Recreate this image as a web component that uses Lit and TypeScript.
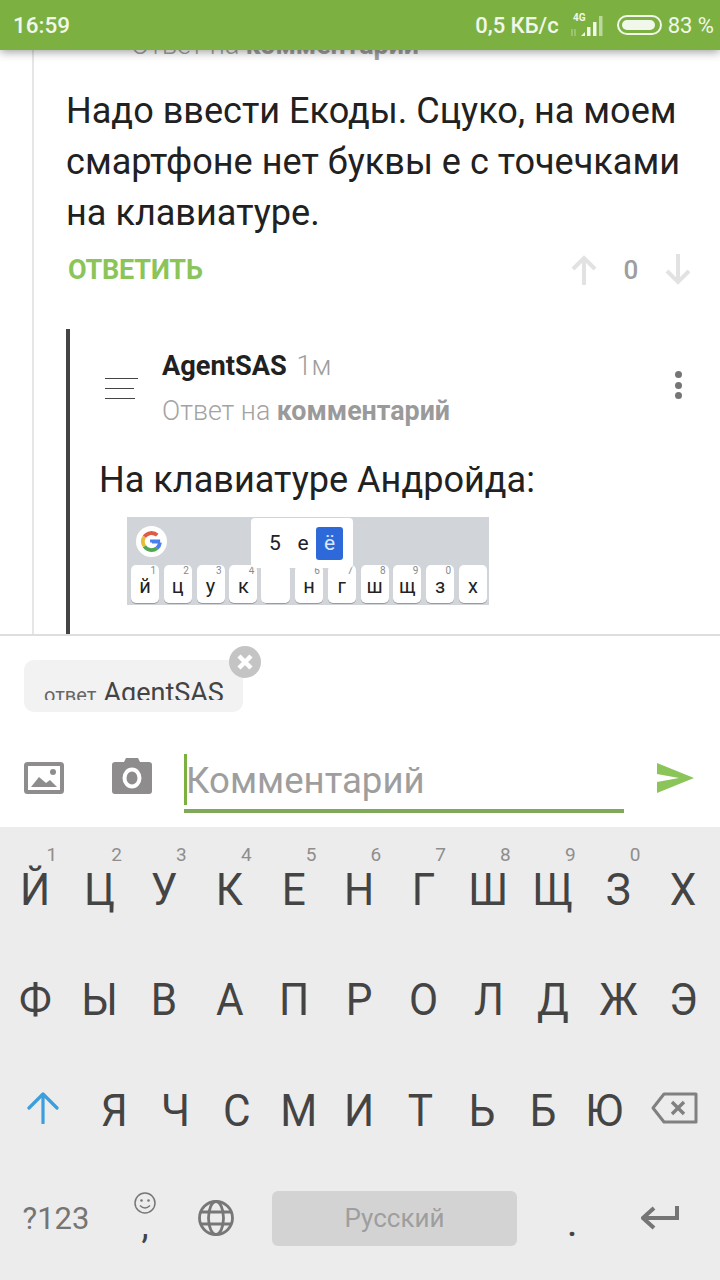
import { LitElement, html, css } from "lit";
import { customElement } from "lit/decorators.js";

const row1 = [["Й","1"],["Ц","2"],["У","3"],["К","4"],["Е","5"],["Н","6"],["Г","7"],["Ш","8"],["Щ","9"],["З","0"],["Х",""]];
const row2 = ["Ф","Ы","В","А","П","Р","О","Л","Д","Ж","Э"];
const row3 = ["Я","Ч","С","М","И","Т","Ь","Б","Ю"];
const mini = [["й","1"],["ц","2"],["у","3"],["к","4"],["",""],["н","6"],["г","7"],["ш","8"],["щ","9"],["з","0"],["х",""]];

@customElement("app-root")
export class AppRoot extends LitElement {
  static styles = css`
    :host { display: block; width: 720px; height: 1280px; overflow: hidden; font-family: Roboto, "Noto Sans", sans-serif; background: #fff; }
    .screen { display: flex; flex-direction: column; height: 1280px; }
    .status { position: relative; z-index: 2; flex: 0 0 50px; height: 50px; background: #7cb142; color: #f1f7ea; display: flex; align-items: center; padding: 0 6px 0 13px; box-sizing: border-box; box-shadow: 0 2px 9px rgba(0,0,0,.38); }
    .time { font-size: 22.5px; font-weight: 500; flex: 1; }
    .speed { font-size: 22px; font-weight: 500; }
    .net { margin: 0 12px 0 11px; display: block; }
    .batt { display: block; margin-right: 6px; }
    .pct { font-size: 22px; }
    .content { flex: 0 0 584px; height: 584px; overflow: hidden; box-sizing: border-box; }
    .thread { margin-left: 32px; border-left: 2px solid #e6e6e6; padding-left: 32px; height: 604px; box-sizing: border-box; }
    .clipped { margin: -20px 0 0 65px; font-size: 26.8px; line-height: 30px; color: #9e9e9e; font-weight: 300; white-space: nowrap; }
    .clipped b, .sub b { font-weight: 700; }
    .msg { margin: 26px 0 0; font-size: 36.1px; line-height: 51px; color: #212121; white-space: nowrap; }
    .actions { display: flex; align-items: center; height: 40px; margin-top: 11px; }
    .reply { flex: 1; font-size: 27px; font-weight: 700; letter-spacing: -.2px; color: #8bc55a; padding-left: 2px; }
    .votes { display: flex; align-items: center; margin-right: 26px; }
    .votes svg { display: block; }
    .zero { width: 62px; text-align: center; font-size: 26px; font-weight: 500; color: #9e9e9e; }
    .nested { margin-top: 39px; height: 320px; border-left: 4px solid #444; box-sizing: border-box; }
    .head { display: flex; padding-top: 20px; height: 125px; box-sizing: border-box; }
    .burger { width: 33px; margin: 29px 24px 0 35px; display: flex; flex-direction: column; gap: 9px; }
    .burger i { display: block; height: 1px; background: #444; }
    .burger i:nth-child(2) { width: 29px; }
    .burger i:nth-child(3) { width: 30px; }
    .who { flex: 1; }
    .name { font-size: 27.2px; line-height: 34px; font-weight: 700; color: #212121; white-space: nowrap; }
    .ago { font-weight: 300; color: #9e9e9e; margin-left: 3px; }
    .sub { font-size: 26.8px; line-height: 30px; margin-top: 13px; color: #a3a3a3; font-weight: 300; white-space: nowrap; }
    .sub b { color: #9a9a9a; }
    .dots { display: flex; flex-direction: column; gap: 3.5px; margin: 22px 38px 0 0; }
    .dots i { display: block; width: 7px; height: 7px; border-radius: 50%; background: #757575; }
    .body { margin: 0 0 0 29px; font-size: 36.1px; line-height: 44px; color: #212121; white-space: nowrap; padding-top: 4px; }
    .shot { position: relative; margin: 15px 0 0 57px; width: 362px; height: 88px; background: #d1d4d9; }
    .g { position: absolute; left: 9px; top: 9px; width: 31px; height: 31px; border-radius: 50%; background: #fff; display: flex; align-items: center; justify-content: center; }
    .g svg { display: block; }
    .minikeys { position: absolute; left: 4px; top: 48px; display: flex; }
    .mk { position: relative; width: 28px; height: 38px; margin-right: 4.8px; border-radius: 5px; background: #fff; box-shadow: 0 1px 0 #9a9ca0; display: flex; align-items: center; justify-content: center; font-size: 20px; color: #222; padding-top: 4px; box-sizing: border-box; }
    .mk sup { position: absolute; right: 3px; top: 1px; font-size: 10px; line-height: 10px; color: #8a8a8a; }
    .pop { position: absolute; left: 124px; top: 1px; width: 102px; height: 50px; background: #fff; border-radius: 4px; display: flex; align-items: center; font-size: 21px; color: #222; }
    .pop span { width: 24px; text-align: center; }
    .pop .a { margin-left: 12px; }
    .pop .b { margin-left: 4px; }
    .pop .c { margin-left: 1px; width: 27px; height: 33px; border-radius: 3px; background: #2e69da; color: #dbe6fa; line-height: 33px; }
    .stem { position: absolute; left: 134px; top: 48px; width: 28px; height: 38px; background: #fff; border-radius: 0 0 5px 5px; }
    .composer { flex: 0 0 193px; height: 193px; box-sizing: border-box; border-top: 2px solid #dedede; position: relative; background: #fff; padding: 24px 0 0 24px; }
    .chip { position: relative; width: 219px; height: 52px; background: #f2f2f2; border-radius: 10px; }
    .chiptext { height: 40px; overflow: hidden; padding: 0 0 0 20px; display: flex; align-items: baseline; gap: 7px; white-space: nowrap; line-height: 67px; color: #444; font-size: 27px; }
    .chiptext small { font-size: 20px; color: #666; }
    .x { position: absolute; right: -18px; top: -14px; width: 32px; height: 32px; display: block; }
    .inputrow { display: flex; align-items: flex-start; margin-top: 42px; }
    .inputrow svg { display: block; flex: none; }
    .ic1 { margin: 8px 48px 0 0; }
    .ic2 { margin: 4px 32px 0 0; }
    .field { width: 440px; height: 59px; box-sizing: border-box; border-bottom: 4px solid #7fa958; display: flex; }
    .caret { width: 3px; height: 51px; background: #7cb142; }
    .ph { font-size: 36.6px; line-height: 54px; color: #9e9e9e; margin-left: -1px; }
    .send { margin: 9px 0 0 33px; }
    .kbd { flex: 1; background: #ececec; padding-top: 6px; box-sizing: border-box; }
    .row { display: flex; height: 110px; align-items: center; color: #444; font-size: 45px; }
    .row.num { padding-left: 2.5px; }
    .key { position: relative; width: 64.8px; text-align: center; line-height: 114px; height: 110px; }
    .key span, .k3 span { display: inline-block; transform: scaleX(.94); }
    .key sup { position: absolute; left: 44px; top: 12px; font-size: 19px; line-height: 20px; color: #8e8e8e; }
    .shift { width: 84px; display: flex; justify-content: center; padding-left: 2px; box-sizing: border-box; }
    .k3 { width: 61.2px; text-align: center; line-height: 116px; height: 110px; }
    .bk { flex: 1; display: flex; justify-content: center; padding-right: 6px; }
    .cell { display: flex; justify-content: center; align-items: center; flex: none; height: 110px; }
    .sym { width: 112px; font-size: 31px; color: #757575; }
    .emo { width: 66px; flex-direction: column; gap: 8px; font-size: 36px; line-height: 20px; color: #444; }
    .emo span { height: 22px; line-height: 8px; }
    .glob { width: 76px; margin-right: 18px; }
    .space { flex: none; width: 245px; height: 55px; background: #d3d3d3; border-radius: 6px; display: flex; align-items: center; justify-content: center; font-size: 26px; color: #9e9e9e; }
    .dot { width: 110px; font-size: 30px; font-weight: 700; color: #444; padding-top: 14px; box-sizing: border-box; }
    .ent { width: 66px; }
  `;

  arrow(up: boolean, color: string) {
    const d = up ? "M16 31V3M5 15L16 4l11 11" : "M16 0v28M5 17l11 11 11-11";
    return html`<svg width="32" height="32" viewBox="0 0 32 32"><path d="${d}" fill="none" stroke="${color}" stroke-width="4"/></svg>`;
  }

  render() {
    return html`<div class="screen">
      <div class="status">
        <span class="time">16:59</span>
        <span class="speed">0,5 КБ/с</span>
        <svg class="net" width="35" height="26" viewBox="0 0 35 26">
          <text x="3" y="9" font-size="10" font-weight="700" font-family="Roboto" fill="#f1f7ea">4G</text>
          <path d="M2 24v-7M5 24v-7" stroke="#f1f7ea" stroke-opacity=".45" stroke-width="1.2"/>
          <path d="M11 24l4-4v4z" fill="#f1f7ea"/>
          <rect x="17" y="15" width="3.5" height="9" fill="#f1f7ea"/><rect x="23" y="10" width="3.5" height="14" fill="#f1f7ea"/><rect x="29" y="4" width="3.5" height="20" fill="#f1f7ea" fill-opacity=".55"/>
        </svg>
        <svg class="batt" width="45" height="20" viewBox="0 0 45 20"><rect x="1" y="1" width="43" height="18" rx="9" fill="none" stroke="#f1f7ea" stroke-width="2"/><rect x="5" y="5" width="33" height="10" rx="5" fill="#f1f7ea"/></svg>
        <span class="pct">83 %</span>
      </div>
      <div class="content"><div class="thread">
        <div class="clipped">Ответ на <b>комментарий</b></div>
        <div class="msg">Надо ввести Екоды. Сцуко, на моем<br>смартфоне нет буквы е с точечками<br>на клавиатуре.</div>
        <div class="actions">
          <span class="reply">ОТВЕТИТЬ</span>
          <div class="votes">${this.arrow(true, "#e2e2e2")}<span class="zero">0</span>${this.arrow(false, "#e2e2e2")}</div>
        </div>
        <div class="nested">
          <div class="head">
            <div class="burger"><i></i><i></i><i></i></div>
            <div class="who">
              <div class="name">AgentSAS <span class="ago">1м</span></div>
              <div class="sub">Ответ на <b>комментарий</b></div>
            </div>
            <div class="dots"><i></i><i></i><i></i></div>
          </div>
          <div class="body">На клавиатуре Андройда:</div>
          <div class="shot">
            <div class="g"><svg width="23" height="23" viewBox="0 0 24 24">
              <path d="M21 12h-8.5v1" fill="none" stroke="#4a80ec" stroke-width="4"/>
              <path d="M20.8 13a9 9 0 0 1-3.2 6" fill="none" stroke="#4a80ec" stroke-width="4"/>
              <path d="M17.6 19A9 9 0 0 1 4.6 17" fill="none" stroke="#4fa755" stroke-width="4"/>
              <path d="M4.6 17a9 9 0 0 1 0-10" fill="none" stroke="#e9bb3a" stroke-width="4"/>
              <path d="M4.6 7A9 9 0 0 1 18 5.4" fill="none" stroke="#de5b48" stroke-width="4"/>
            </svg></div>
            <div class="minikeys">${mini.map(([l, n]) => html`<div class="mk">${l}${n ? html`<sup>${n}</sup>` : ""}</div>`)}</div>
            <div class="stem"></div>
            <div class="pop"><span class="a">5</span><span class="b">е</span><span class="c">ё</span></div>
          </div>
        </div>
      </div></div>
      <div class="composer">
        <div class="chip">
          <div class="chiptext"><small>ответ</small><span>AgentSAS</span></div>
          <svg class="x" viewBox="0 0 32 32"><circle cx="16" cy="16" r="16" fill="#c4c4c4"/><path d="M10 10l12 12M22 10L10 22" stroke="#fff" stroke-width="4.5"/></svg>
        </div>
        <div class="inputrow">
          <svg class="ic1" width="40" height="32" viewBox="0 0 40 32"><rect x="2" y="2" width="36" height="28" rx="1.5" fill="none" stroke="#8e8c8c" stroke-width="4"/><path d="M7 25l8-10 7 6 4-3 7 7z" fill="#8e8c8c"/><circle cx="29" cy="10" r="3" fill="#8e8c8c"/></svg>
          <svg class="ic2" width="40" height="36" viewBox="0 0 40 36"><path d="M12 4l2-4h12l2 4h9a3 3 0 0 1 3 3v26a3 3 0 0 1-3 3H3a3 3 0 0 1-3-3V7a3 3 0 0 1 3-3z" fill="#8e8c8c"/><ellipse cx="20" cy="20" rx="7.5" ry="8.5" fill="none" stroke="#fff" stroke-width="4"/></svg>
          <div class="field"><div class="caret"></div><div class="ph">Комментарий</div></div>
          <svg class="send" width="37" height="30" viewBox="0 0 37 30"><path d="M0 0l37 15L0 30v-11l22-4L0 11z" fill="#8bc55a"/></svg>
        </div>
      </div>
      <div class="kbd">
        <div class="row num">${row1.map(([l, n]) => html`<div class="key"><span>${l}</span>${n ? html`<sup>${n}</sup>` : ""}</div>`)}</div>
        <div class="row num">${row2.map((l) => html`<div class="key"><span>${l}</span></div>`)}</div>
        <div class="row">
          <div class="shift"><svg width="32" height="32" viewBox="0 0 32 32"><path d="M16 31V2M2 16L16 2l14 14" fill="none" stroke="#3a9fdc" stroke-width="3.2" stroke-linecap="round" stroke-linejoin="round"/></svg></div>
          ${row3.map((l) => html`<div class="k3"><span>${l}</span></div>`)}
          <div class="bk"><svg width="47" height="32" viewBox="0 0 47 32"><path d="M45 2H13L2 16l11 14h32z" fill="none" stroke="#808080" stroke-width="3" stroke-linejoin="round"/><path d="M21 10l12 12M33 10L21 22" stroke="#808080" stroke-width="3.4"/></svg></div>
        </div>
        <div class="row">
          <div class="cell sym">?123</div>
          <div class="cell emo">
            <svg width="22" height="22" viewBox="0 0 22 22"><circle cx="11" cy="11" r="10" fill="none" stroke="#777" stroke-width="1.5"/><circle cx="7.5" cy="8.5" r="1.3" fill="#777"/><circle cx="14.5" cy="8.5" r="1.3" fill="#777"/><path d="M6 13.5q5 5 10 0" fill="none" stroke="#777" stroke-width="1.4"/></svg>
            <span>,</span>
          </div>
          <div class="cell glob"><svg width="36" height="36" viewBox="0 0 36 36" fill="none" stroke="#777" stroke-width="2.8"><circle cx="18" cy="18" r="16.5"/><ellipse cx="18" cy="18" rx="7.5" ry="16.5"/><path d="M3 12h30M3 24h30"/></svg></div>
          <div class="space">Русский</div>
          <div class="cell dot">.</div>
          <div class="cell ent"><svg width="38" height="24" viewBox="0 0 38 24"><path d="M36 0v12H3M13 2L2 12l11 10" fill="none" stroke="#757575" stroke-width="4"/></svg></div>
        </div>
      </div>
    </div>`;
  }
}
